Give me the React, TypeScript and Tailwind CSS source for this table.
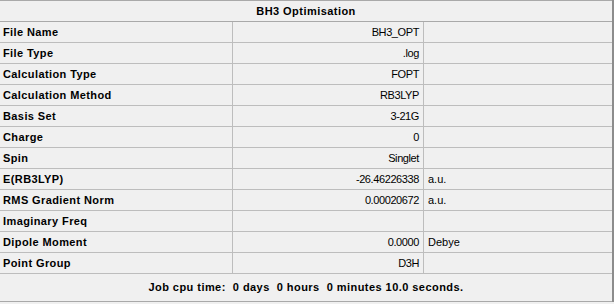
import React from "react";

type Row = { label: string; value: string; unit?: string };

const rows: Row[] = [
  { label: "File Name", value: "BH3_OPT" },
  { label: "File Type", value: ".log" },
  { label: "Calculation Type", value: "FOPT" },
  { label: "Calculation Method", value: "RB3LYP" },
  { label: "Basis Set", value: "3-21G" },
  { label: "Charge", value: "0" },
  { label: "Spin", value: "Singlet" },
  { label: "E(RB3LYP)", value: "-26.46226338", unit: "a.u." },
  { label: "RMS Gradient Norm", value: "0.00020672", unit: "a.u." },
  { label: "Imaginary Freq", value: "" },
  { label: "Dipole Moment", value: "0.0000", unit: "Debye" },
  { label: "Point Group", value: "D3H" },
];

export default function App() {
  return (
    <div
      className="w-[614px] h-[304px] bg-[#f0f0f0] text-[11px] text-black overflow-hidden"
      style={{ fontFamily: '"Liberation Sans", Arial, sans-serif' }}
    >
      <div className="w-[614px] border-r-2 border-[#8c8c8c] h-[302px] flex flex-col">
        <div className="h-[22px] border-t border-b border-[#a9a9a9] flex items-center justify-center font-bold tracking-[0.45px]">
          BH3 Optimisation
        </div>
        {rows.map((r) => (
          <div key={r.label} className="h-[21px] border-b border-[#bdbdbd] flex">
            <div className="w-[233px] border-r border-[#bdbdbd] flex items-center pl-[3px] font-bold tracking-[0.4px]">
              {r.label}
            </div>
            <div className="w-[191px] border-r border-[#bdbdbd] flex items-center justify-end pr-[4px] tracking-[-0.4px]">
              {r.value}
            </div>
            <div className="flex-1 flex items-center pl-[4px]">{r.unit ?? ""}</div>
          </div>
        ))}
        <div className="h-[28px] border-b border-[#a9a9a9] flex items-center justify-center font-bold whitespace-pre tracking-[0.45px]">
          {"Job cpu time:  0 days  0 hours  0 minutes 10.0 seconds."}
        </div>
      </div>
    </div>
  );
}
